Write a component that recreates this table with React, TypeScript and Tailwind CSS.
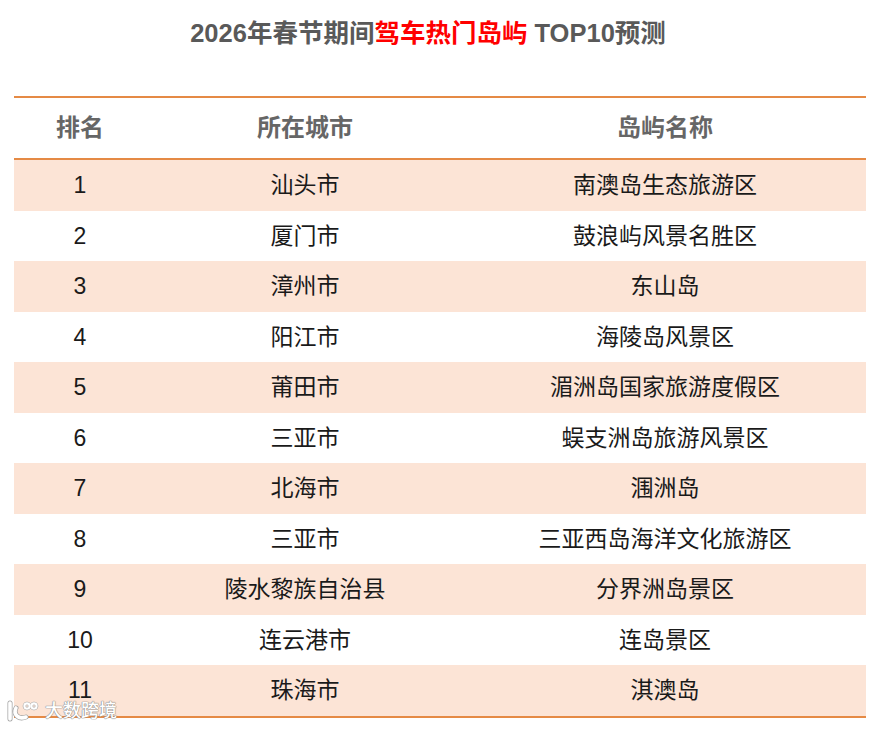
import React from "react";

const rows: [string, string, string][] = [
  ["1", "汕头市", "南澳岛生态旅游区"],
  ["2", "厦门市", "鼓浪屿风景名胜区"],
  ["3", "漳州市", "东山岛"],
  ["4", "阳江市", "海陵岛风景区"],
  ["5", "莆田市", "湄洲岛国家旅游度假区"],
  ["6", "三亚市", "蜈支洲岛旅游风景区"],
  ["7", "北海市", "涠洲岛"],
  ["8", "三亚市", "三亚西岛海洋文化旅游区"],
  ["9", "陵水黎族自治县", "分界洲岛景区"],
  ["10", "连云港市", "连岛景区"],
  ["11", "珠海市", "淇澳岛"],
];

const font = {
  fontFamily: '"Liberation Sans", "Noto Sans CJK SC", sans-serif',
};

export default function App() {
  return (
    <div
      className="relative w-[886px] h-[730px] bg-white overflow-hidden"
      style={font}
    >
      <div className="h-[68px] flex items-center justify-center pr-[30px]">
        <h1 className="text-[25.5px] font-bold text-[#595959] leading-none">
          2026年春节期间<span className="text-[#ff0000]">驾车热门岛屿</span> TOP10预测
        </h1>
      </div>
      <div className="mt-[28px] mx-[14px] w-[852px] border-t-2 border-b-2 border-[#e58a45]">
        <div className="h-[62px] flex items-center border-b-2 border-[#e58a45] text-[24px] font-bold text-[#666666]">
          <div className="w-[132px] text-center">排名</div>
          <div className="w-[318px] text-center">所在城市</div>
          <div className="w-[402px] text-center">岛屿名称</div>
        </div>
        {rows.map((r, i) => (
          <div
            key={r[0]}
            className={`h-[50.5px] flex items-center text-[23px] text-[#1a1a1a] ${
              i % 2 === 0 ? "bg-[#fce4d6]" : "bg-white"
            }`}
          >
            <div className="w-[132px] text-center">{r[0]}</div>
            <div className="w-[318px] text-center">{r[1]}</div>
            <div className="w-[402px] text-center">{r[2]}</div>
          </div>
        ))}
      </div>
      <div className="absolute left-[6px] top-[700px] flex items-center gap-[3px]">
        <svg width="36" height="22" viewBox="0 0 36 22">
          <g fill="none" strokeLinecap="round">
            <path d="M4 3 L4 19" stroke="#a0a0a0" strokeWidth="5" />
            <path d="M10 8 C7 14 12 20 20 17" stroke="#a0a0a0" strokeWidth="5" />
            <circle cx="21" cy="6" r="2.6" stroke="#a0a0a0" strokeWidth="3.4" />
            <circle cx="28" cy="6" r="2.6" stroke="#a0a0a0" strokeWidth="3.4" />
            <path d="M4 3 L4 19" stroke="#ffffff" strokeWidth="3.6" />
            <path d="M10 8 C7 14 12 20 20 17" stroke="#ffffff" strokeWidth="3.6" />
            <circle cx="21" cy="6" r="2.6" stroke="#ffffff" strokeWidth="2.2" />
            <circle cx="28" cy="6" r="2.6" stroke="#ffffff" strokeWidth="2.2" />
          </g>
        </svg>
        <span className="text-[18px] font-medium text-white leading-none [text-shadow:0_0_1px_#888,0_0_1px_#888,0_0_1px_#888]">
          大数跨境
        </span>
      </div>
    </div>
  );
}
